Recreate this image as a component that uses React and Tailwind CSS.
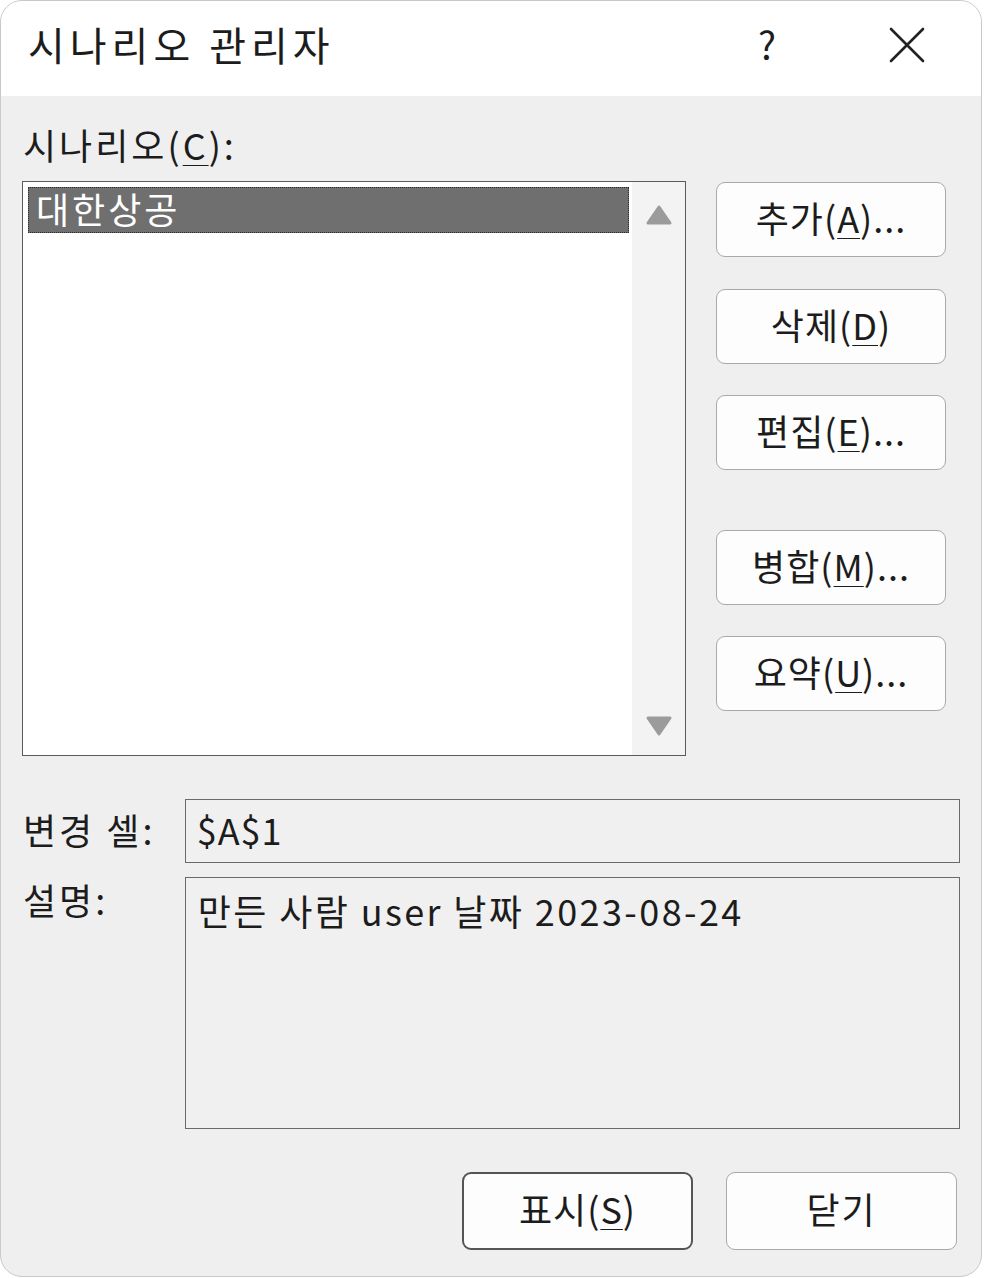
import React from 'react';

const FONT = { fontFamily: '"Noto Sans CJK KR", "Noto Sans", sans-serif' };

// --- Small pieces ---
function Key({ children }) {
  return <span className="underline decoration-1 underline-offset-[5px]">{children}</span>;
}

function SideButton({ children, className = '' }) {
  return (
    <button
      className={`w-[230px] h-[75px] rounded-[9px] border border-[#a9a9a9] bg-[#fdfdfd] text-[36px] leading-none tracking-[1px] text-[#1c1c1c] flex items-center justify-center pb-[5px] ${className}`}
    >
      {children}
    </button>
  );
}

function Arrow({ up }) {
  return (
    <svg width="28" height="22" viewBox="0 0 28 22">
      <path
        d={up ? 'M14 3 L25 19 L3 19 Z' : 'M3 3 L25 3 L14 19 Z'}
        fill="#9b9b9b"
        stroke="#9b9b9b"
        strokeWidth="3"
        strokeLinejoin="round"
      />
    </svg>
  );
}

export default function App() {
  return (
    <div className="w-[984px] h-[1278px] bg-white" style={FONT}>
      <div className="w-[982px] h-[1277px] rounded-[22px] border border-[#c9c9c9] overflow-hidden flex flex-col bg-[#efefef] text-[#1c1c1c]">
        {/* --- Title bar --- */}
        <div className="h-[95px] bg-white flex items-center shrink-0 pb-[10px]">
          <div className="pl-[27px] text-[40px] leading-none tracking-[5px] flex-1">시나리오 관리자</div>
          <div className="w-[40px] text-[38px] leading-none mr-[100px] text-center">?</div>
          <svg width="40" height="40" viewBox="0 0 40 40" className="mr-[54px] mt-[2px]">
            <path d="M4 4 L36 36 M36 4 L4 36" stroke="#222" strokeWidth="2.6" strokeLinecap="round" />
          </svg>
        </div>

        {/* --- Body --- */}
        <div className="flex-1 px-[21px] pt-[23px]">
          <div className="h-[50px] leading-[50px] text-[36px] tracking-[3px] pl-[1px] pb-[4px]">
            시나리오(<Key>C</Key>):
          </div>

          <div className="flex mt-[12px]">
            {/* list box */}
            <div className="w-[664px] h-[575px] border border-[#5a5a5a] bg-white flex">
              <div className="flex-1 pt-[5px] pl-[5px] pr-[3px]">
                <div className="h-[46px] bg-[#6f6f6f] border border-dotted border-[#2a2a2a] text-white text-[36px] leading-[40px] tracking-[3px] pl-[7px]">
                  대한상공
                </div>
              </div>
              <div className="w-[53px] bg-[#f3f3f3] flex flex-col items-center justify-between pt-[22px] pb-[18px]">
                <Arrow up />
                <Arrow />
              </div>
            </div>

            {/* buttons */}
            <div className="ml-[30px] pt-[1px] flex flex-col">
              <SideButton>추가(<Key>A</Key>)...</SideButton>
              <SideButton className="mt-[32px]">삭제(<Key>D</Key>)</SideButton>
              <SideButton className="mt-[31px]">편집(<Key>E</Key>)...</SideButton>
              <SideButton className="mt-[60px]">병합(<Key>M</Key>)...</SideButton>
              <SideButton className="mt-[31px]">요약(<Key>U</Key>)...</SideButton>
            </div>
          </div>

          {/* changing cells */}
          <div className="flex items-center mt-[43px]">
            <div className="w-[163px] text-[36px] leading-none tracking-[3px] pl-[1px] pb-[4px]">변경 셀:</div>
            <div className="w-[777px] h-[64px] border border-[#6a6a6a] bg-[#f0f0f0] flex items-center pl-[11px] pb-[4px] text-[36px] leading-none tracking-[1px]">
              $A$1
            </div>
          </div>

          {/* description */}
          <div className="flex mt-[14px]">
            <div className="w-[163px] text-[36px] leading-none tracking-[3px] pt-[4px] pl-[1px]">설명:</div>
            <div className="w-[777px] h-[252px] border border-[#6a6a6a] bg-[#f0f0f0] pl-[12px] pt-[10px] text-[36px] leading-[44px] tracking-[2.4px]">
              만든 사람 user 날짜 2023-08-24
            </div>
          </div>

          {/* footer buttons */}
          <div className="flex justify-end gap-[33px] mt-[43px] mr-[3px]">
            <button className="w-[231px] h-[78px] rounded-[9px] border-2 border-[#555] bg-[#fdfdfd] text-[36px] leading-none tracking-[1px] flex items-center justify-center pb-[6px]">
              표시(<Key>S</Key>)
            </button>
            <button className="w-[231px] h-[78px] rounded-[9px] border border-[#a9a9a9] bg-[#fdfdfd] text-[36px] leading-none tracking-[2px] flex items-center justify-center pb-[6px]">
              닫기
            </button>
          </div>
        </div>
      </div>
    </div>
  );
}
